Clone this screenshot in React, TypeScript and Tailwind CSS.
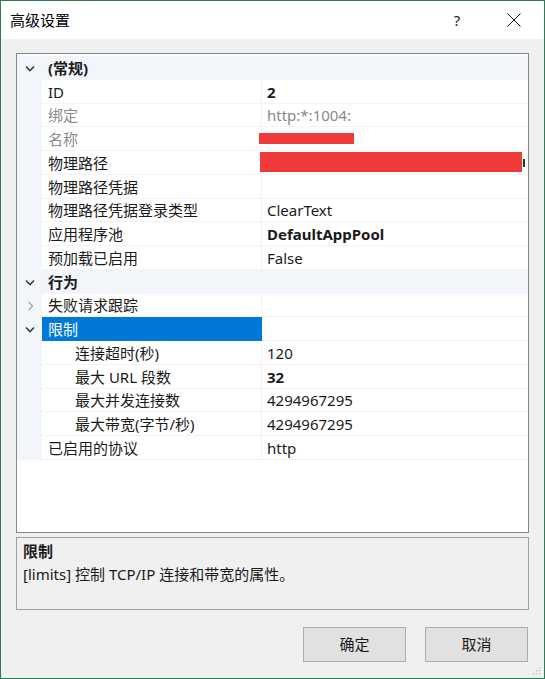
import React from "react";

type Row = {
  kind?: "cat";
  label: string;
  value?: string;
  bold?: boolean;
  grey?: boolean;
  indent?: boolean;
  chevron?: "down" | "right";
  selected?: boolean;
  red?: "name" | "path";
};

const rows: Row[] = [
  { kind: "cat", label: "(常规)", chevron: "down" },
  { label: "ID", value: "2", bold: true },
  { label: "绑定", value: "http:*:1004:", grey: true },
  { label: "名称", grey: true, red: "name" },
  { label: "物理路径", red: "path" },
  { label: "物理路径凭据", value: "" },
  { label: "物理路径凭据登录类型", value: "ClearText" },
  { label: "应用程序池", value: "DefaultAppPool", bold: true },
  { label: "预加载已启用", value: "False" },
  { kind: "cat", label: "行为", chevron: "down" },
  { label: "失败请求跟踪", chevron: "right" },
  { label: "限制", chevron: "down", selected: true },
  { label: "连接超时(秒)", value: "120", indent: true },
  { label: "最大 URL 段数", value: "32", bold: true, indent: true },
  { label: "最大并发连接数", value: "4294967295", indent: true },
  { label: "最大带宽(字节/秒)", value: "4294967295", indent: true },
  { label: "已启用的协议", value: "http" },
];

function ChevronDown() {
  return (
    <svg width="10" height="7" viewBox="0 0 10 7" className="block">
      <polyline points="1,1.5 5,5.5 9,1.5" fill="none" stroke="#3c3c3c" strokeWidth="1.6" />
    </svg>
  );
}

function ChevronRight() {
  return (
    <svg width="7" height="10" viewBox="0 0 7 10" className="block">
      <polyline points="1.5,1 5.5,5 1.5,9" fill="none" stroke="#a6a6a6" strokeWidth="1.4" />
    </svg>
  );
}

function GridRow({ r }: { r: Row }) {
  const isCat = r.kind === "cat";
  return (
    <div className="flex h-[23.75px]">
      <div className="w-[25px] shrink-0 bg-[#f2f5f9] flex items-center">
        {r.chevron === "down" && <div className="ml-[8px] mt-[1px]"><ChevronDown /></div>}
        {r.chevron === "right" && <div className="ml-[10px] mt-[1px]"><ChevronRight /></div>}
      </div>
      {isCat ? (
        <div className="flex-1 bg-[#f2f5f9] flex items-center pl-[6px] pt-[2px] font-bold text-[#1a1a1a]">
          {r.label}
        </div>
      ) : (
        <>
          <div
            className={
              "w-[220px] shrink-0 flex items-center pt-[2px] border-b border-r " +
              (r.selected
                ? "bg-[#0078d7] text-white border-[#0078d7]"
                : "border-[#f3f3f3] " + (r.grey ? "text-[#8a8a8a]" : "text-[#1a1a1a]")) +
              (r.indent ? " pl-[33px]" : " pl-[6px]")
            }
          >
            {r.label}
          </div>
          <div
            className={
              "flex-1 flex items-center pl-[5px] pt-[2px] border-b border-[#f3f3f3] " +
              (r.grey ? "text-[#8a8a8a] " : "text-[#1a1a1a] ") +
              (r.bold ? "font-bold" : "")
            }
          >
            {r.red === "name" && <div className="-ml-[8px] w-[95px] h-[11px] mt-[-2px] bg-[#f03b3b]" />}
            {r.red === "path" && (
              <div className="-ml-[7px] flex items-center">
                <div className="w-[262px] h-[20px] mt-[-2px] bg-[#f03b3b]" />
                <div className="w-[2px] h-[8px] bg-[#333] ml-[1px]" />
              </div>
            )}
            {!r.red && r.value}
          </div>
        </>
      )}
    </div>
  );
}

export default function App() {
  return (
    <div
      className="w-[545px] h-[679px] border border-[#2f7d55] flex flex-col text-[15px] leading-none"
      style={{ fontFamily: '"Noto Sans", "Noto Sans CJK SC", sans-serif' }}
    >
      {/* Title bar */}
      <div className="h-[38px] bg-white flex items-center shrink-0">
        <div className="pl-[9px] text-[15px] text-black pt-[1px]">高级设置</div>
        <div className="flex-1" />
        <div className="w-[20px] text-center text-[15px] text-[#222] mr-[40px]">?</div>
        <svg width="14" height="14" viewBox="0 0 14 14" className="mr-[23px]">
          <line x1="0.5" y1="0.5" x2="13.5" y2="13.5" stroke="#111" strokeWidth="1" />
          <line x1="13.5" y1="0.5" x2="0.5" y2="13.5" stroke="#111" strokeWidth="1" />
        </svg>
      </div>

      {/* Body */}
      <div className="flex-1 bg-[#f0f0f0] px-[15px] pt-[14px] flex flex-col">
        <div className="h-[480px] border border-[#828790] bg-white pt-[2px]">
          {rows.map((r, i) => (
            <GridRow key={i} r={r} />
          ))}
        </div>

        <div className="mt-[4px] h-[73px] border border-[#a0a0a0] bg-[#f0f0f0] px-[6px] pt-[3px]">
          <div className="font-bold text-[#1a1a1a] leading-[20px]">限制</div>
          <div className="text-[#1a1a1a] leading-[20px] mt-[3px]">[limits] 控制 TCP/IP 连接和带宽的属性。</div>
        </div>

        <div className="mt-[17px] flex justify-end gap-[19px] pr-[1px]">
          <button className="w-[103px] h-[35px] bg-[#e1e1e1] border border-[#adadad] text-[#1a1a1a] text-[15px]">
            确定
          </button>
          <button className="w-[103px] h-[35px] bg-[#e1e1e1] border border-[#adadad] text-[#1a1a1a] text-[15px]">
            取消
          </button>
        </div>
        <div className="flex-1 flex justify-end items-end pb-[3px] -mr-[12px]">
          <svg width="9" height="9" viewBox="0 0 9 9">
            <rect x="7" y="1" width="1.2" height="1.2" fill="#b8b8b8" />
            <rect x="4" y="4" width="1.2" height="1.2" fill="#b8b8b8" />
            <rect x="7" y="4" width="1.2" height="1.2" fill="#b8b8b8" />
            <rect x="1" y="7" width="1.2" height="1.2" fill="#b8b8b8" />
            <rect x="4" y="7" width="1.2" height="1.2" fill="#b8b8b8" />
            <rect x="7" y="7" width="1.2" height="1.2" fill="#b8b8b8" />
          </svg>
        </div>
      </div>
    </div>
  );
}
